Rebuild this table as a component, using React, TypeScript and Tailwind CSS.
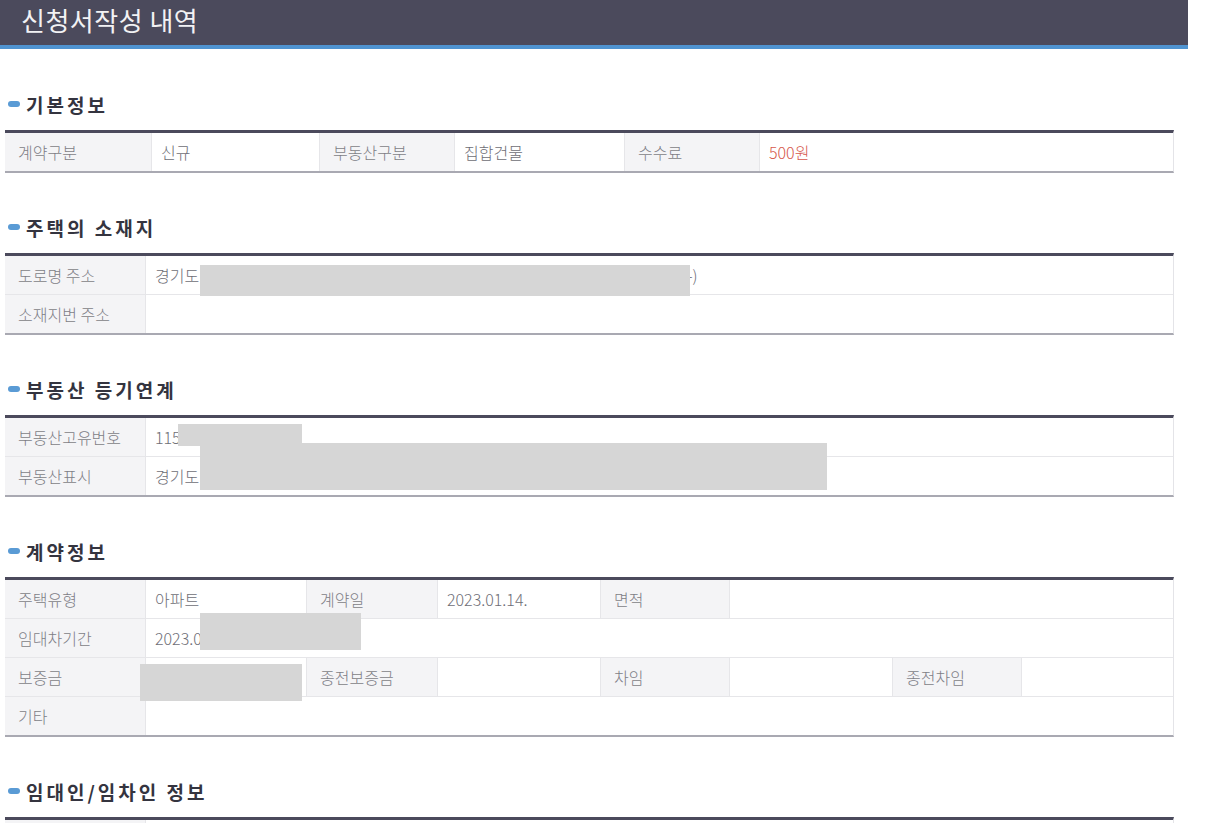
import React from 'react';

type Cell = {
  text?: string;
  label?: boolean;
  w?: string; // tailwind width class, omitted = flex-1
  red?: boolean;
  gap?: string; // hidden spacer behind a redaction, then trailing text
  tail?: string;
};

interface Redaction {
  cls: string;
}

const FONT = { fontFamily: '"Noto Sans CJK KR", "Noto Sans", sans-serif' };

const SectionTitle: React.FC<{ title: string }> = ({ title }) => (
  <div className="flex items-center h-6 pl-[8px] mb-[14px]">
    <span className="w-[12px] h-[6px] rounded-full bg-[#5a9bd5] mr-[6px]" />
    <span className="text-[19px] font-bold tracking-[3px] text-[#34343f] leading-none">{title}</span>
  </div>
);

const InfoTable: React.FC<{ rows: Cell[][]; redactions?: Redaction[] }> = ({ rows, redactions = [] }) => (
  <div className="relative ml-[5px] w-[1169px] border-t-[3px] border-t-[#4b4a5c] border-r border-r-[#e4e4e8] border-b-2 border-b-[#a9a9b2]">
    {rows.map((row, ri) => (
      <div
        key={ri}
        className={`flex ${ri < rows.length - 1 ? 'h-[39px] border-b border-[#e6e6e9]' : 'h-[38px]'}`}
      >
        {row.map((cell, ci) => (
          <div
            key={ci}
            className={[
              'flex items-center text-[16px] font-light h-full',
              cell.w ?? 'flex-1',
              ci < row.length - 1 ? 'border-r border-[#e6e6e9]' : '',
              cell.label ? 'bg-[#f4f4f6] text-[#7e7e86] pl-[13px]' : 'bg-white pl-[9px]',
              cell.red ? 'text-[#d6584c]' : cell.label ? '' : 'text-[#6e6e76]',
            ].join(' ')}
          >
            {cell.text}
            {cell.gap && <span className={`inline-block ${cell.gap}`} />}
            {cell.tail}
          </div>
        ))}
      </div>
    ))}
    {redactions.map((r, i) => (
      <div key={i} className={`absolute bg-[#d6d6d6] ${r.cls}`} />
    ))}
  </div>
);

const App: React.FC = () => {
  return (
    <div className="w-[1208px] min-h-[823px] bg-white overflow-hidden" style={FONT}>
      {/* Header */}
      <div className="w-[1188px] h-[45px] bg-[#4b4a5c] flex items-center pl-[21px] pb-[5px]">
        <h1 className="text-[26px] text-[#f2f2f4] leading-none tracking-[0.5px]">신청서작성 내역</h1>
      </div>
      <div className="w-[1188px] h-[4px] bg-[#4f93d0]" />

      {/* 기본정보 */}
      <section className="pt-[43px]">
        <SectionTitle title="기본정보" />
        <InfoTable
          rows={[
            [
              { text: '계약구분', label: true, w: 'w-[147px]' },
              { text: '신규', w: 'w-[168px]' },
              { text: '부동산구분', label: true, w: 'w-[135px]' },
              { text: '집합건물', w: 'w-[170px]' },
              { text: '수수료', label: true, w: 'w-[135px]' },
              { text: '500원', red: true },
            ],
          ]}
        />
      </section>

      {/* 주택의 소재지 */}
      <section className="pt-[42px]">
        <SectionTitle title="주택의 소재지" />
        <InfoTable
          rows={[
            [
              { text: '도로명 주소', label: true, w: 'w-[141px]' },
              { text: '경기도', gap: 'w-[488px]', tail: '-)' },
            ],
            [{ text: '소재지번 주소', label: true, w: 'w-[141px]' }, { text: '' }],
          ]}
          redactions={[{ cls: 'left-[195px] top-[9px] w-[490px] h-[31px]' }]}
        />
      </section>

      {/* 부동산 등기연계 */}
      <section className="pt-[42px]">
        <SectionTitle title="부동산 등기연계" />
        <InfoTable
          rows={[
            [
              { text: '부동산고유번호', label: true, w: 'w-[141px]' },
              { text: '115' },
            ],
            [
              { text: '부동산표시', label: true, w: 'w-[141px]' },
              { text: '경기도' },
            ],
          ]}
          redactions={[
            { cls: 'left-[173px] top-[6px] w-[124px] h-[22px]' },
            { cls: 'left-[195px] top-[25px] w-[627px] h-[47px]' },
          ]}
        />
      </section>

      {/* 계약정보 */}
      <section className="pt-[42px]">
        <SectionTitle title="계약정보" />
        <InfoTable
          rows={[
            [
              { text: '주택유형', label: true, w: 'w-[141px]' },
              { text: '아파트', w: 'w-[161px]' },
              { text: '계약일', label: true, w: 'w-[131px]' },
              { text: '2023.01.14.', w: 'w-[163px]' },
              { text: '면적', label: true, w: 'w-[129px]' },
              { text: '' },
            ],
            [
              { text: '임대차기간', label: true, w: 'w-[141px]' },
              { text: '2023.0' },
            ],
            [
              { text: '보증금', label: true, w: 'w-[141px]' },
              { text: '', w: 'w-[161px]' },
              { text: '종전보증금', label: true, w: 'w-[131px]' },
              { text: '', w: 'w-[163px]' },
              { text: '차임', label: true, w: 'w-[129px]' },
              { text: '', w: 'w-[163px]' },
              { text: '종전차임', label: true, w: 'w-[129px]' },
              { text: '' },
            ],
            [
              { text: '기타', label: true, w: 'w-[141px]' },
              { text: '' },
            ],
          ]}
          redactions={[
            { cls: 'left-[195px] top-[33px] w-[161px] h-[37px]' },
            { cls: 'left-[135px] top-[84px] w-[162px] h-[37px]' },
          ]}
        />
      </section>

      {/* 임대인/임차인 정보 */}
      <section className="pt-[42px]">
        <SectionTitle title="임대인/임차인 정보" />
        <InfoTable
          rows={[
            [
              { text: '', label: true, w: 'w-[141px]' },
              { text: '' },
            ],
          ]}
        />
      </section>
    </div>
  );
};

export default App;
